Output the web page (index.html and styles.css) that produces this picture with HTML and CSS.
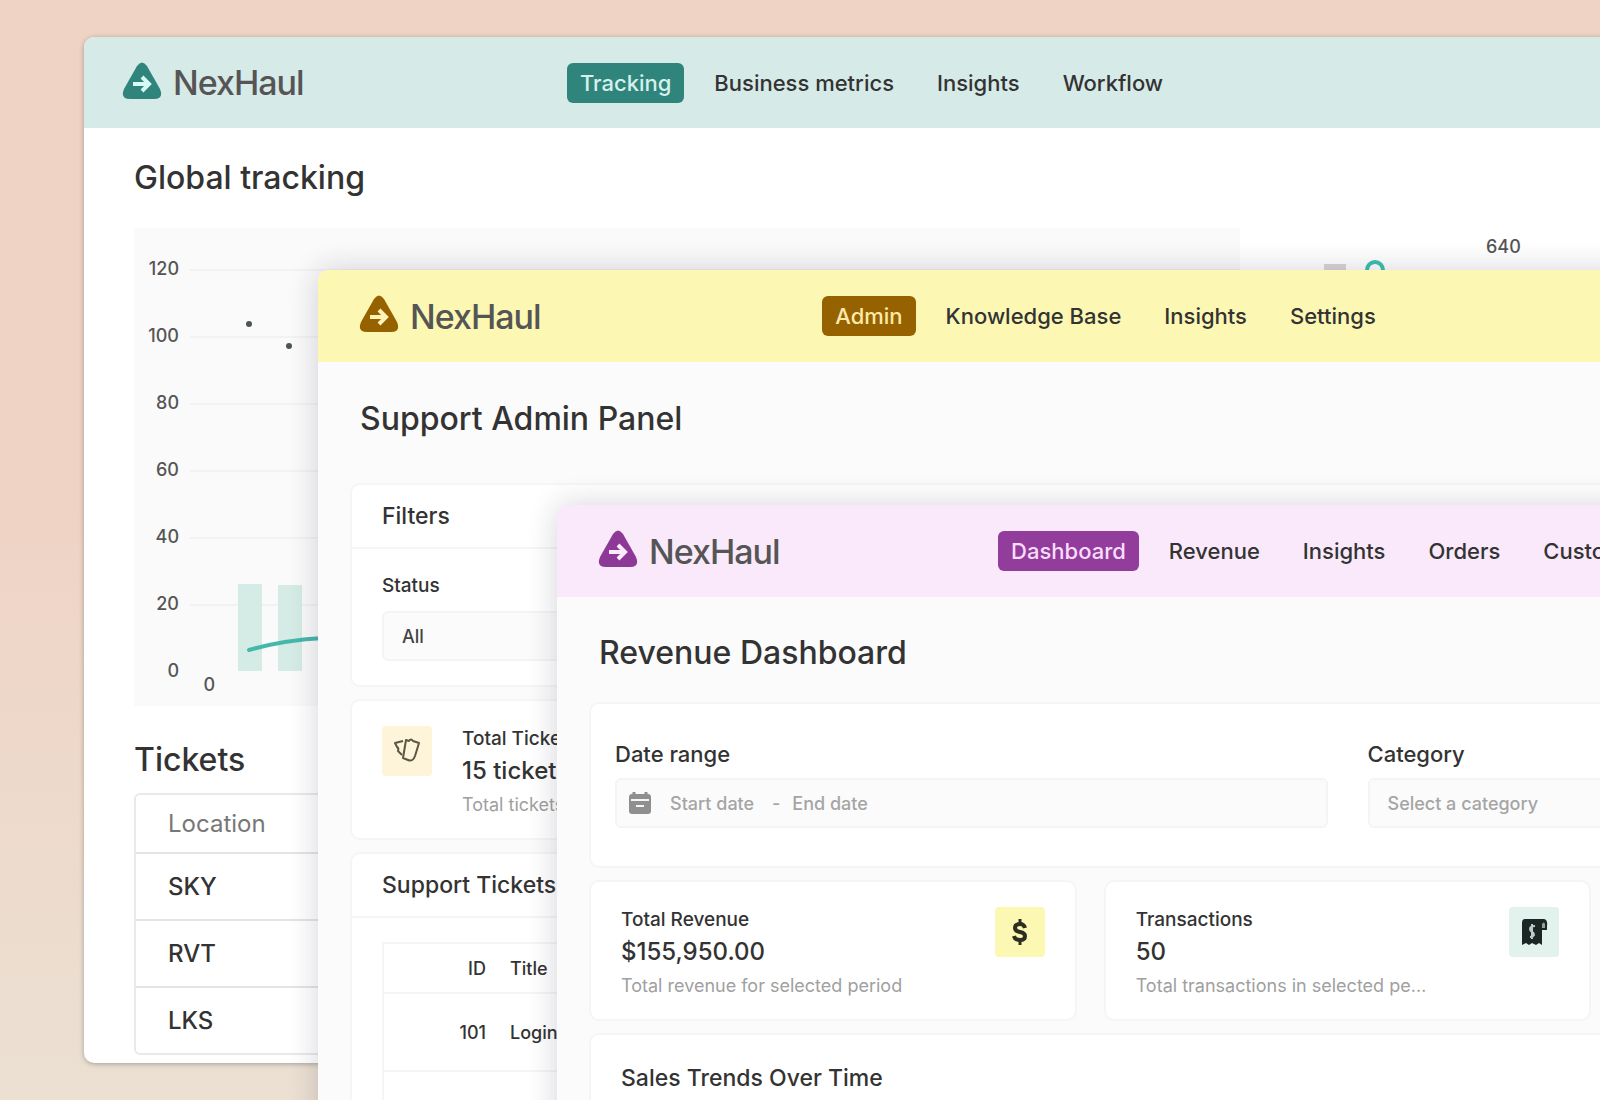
FILE: index.html
```html
<!DOCTYPE html>
<html lang="en">
<head>
    <meta charset="utf-8">
    <title>NexHaul</title>
    <link rel="stylesheet" href="styles.css">
</head>
<body>
    <div class="desktop">

        <!-- Tracking app -->
        <section class="window tracking">
            <header class="topbar">
                <a href="#" class="brand">
                    <svg class="logo" viewBox="0 0 40 38">
                        <path d="M15 4 Q20 -3 25 4 L38 27 Q42 37 32 37 L8 37 Q-2 37 2 27 Z" fill="currentColor"/>
                        <path d="M11 22 H27 M20 15 L27 22 L20 29" fill="none" stroke="#d8faf5" stroke-width="4"/>
                    </svg>
                    <span>NexHaul</span>
                </a>
                <nav>
                    <a href="#" class="active">Tracking</a>
                    <a href="#">Business metrics</a>
                    <a href="#">Insights</a>
                    <a href="#">Workflow</a>
                </nav>
            </header>
            <main>
                <h1>Global tracking</h1>
                <div class="charts">
                    <svg class="chart">
                        <g stroke="#f2f2f2" stroke-width="2">
                            <path d="M56 42 H1106"/>
                            <path d="M56 109 H1106"/>
                            <path d="M56 176 H1106"/>
                            <path d="M56 243 H1106"/>
                            <path d="M56 310 H1106"/>
                            <path d="M56 377 H1106"/>
                        </g>
                        <g class="axis" text-anchor="end">
                            <text x="45" y="47">120</text>
                            <text x="45" y="114">100</text>
                            <text x="45" y="181">80</text>
                            <text x="45" y="248">60</text>
                            <text x="45" y="315">40</text>
                            <text x="45" y="382">20</text>
                            <text x="45" y="449">0</text>
                            <text x="81" y="463">0</text>
                        </g>
                        <rect x="104" y="356" width="24" height="87" fill="#d5ebe5"/>
                        <rect x="144" y="357" width="24" height="86" fill="#d5ebe5"/>
                        <path d="M115 422 Q150 412 190 410" fill="none" stroke="#45b8ac" stroke-width="4" stroke-linecap="round"/>
                        <circle cx="115" cy="96" r="3" fill="#4c5655"/>
                        <circle cx="155" cy="118" r="3" fill="#4c5655"/>
                    </svg>
                    <svg class="chart side">
                        <rect x="84" y="36" width="22" height="10" fill="#d8d6da"/>
                        <circle cx="135" cy="42" r="8" fill="none" stroke="#3cc0b0" stroke-width="4"/>
                        <text class="axis" x="246" y="25">640</text>
                    </svg>
                </div>
                <h2>Tickets</h2>
                <table class="locations">
                    <thead>
                        <tr><th>Location</th></tr>
                    </thead>
                    <tbody>
                        <tr><td>SKY</td></tr>
                        <tr><td>RVT</td></tr>
                        <tr><td>LKS</td></tr>
                    </tbody>
                </table>
            </main>
        </section>

        <!-- Support app -->
        <section class="window support">
            <header class="topbar">
                <a href="#" class="brand">
                    <svg class="logo" viewBox="0 0 40 38">
                        <path d="M15 4 Q20 -3 25 4 L38 27 Q42 37 32 37 L8 37 Q-2 37 2 27 Z" fill="currentColor"/>
                        <path d="M11 22 H27 M20 15 L27 22 L20 29" fill="none" stroke="#fff3b8" stroke-width="4"/>
                    </svg>
                    <span>NexHaul</span>
                </a>
                <nav>
                    <a href="#" class="active">Admin</a>
                    <a href="#">Knowledge Base</a>
                    <a href="#">Insights</a>
                    <a href="#">Settings</a>
                </nav>
            </header>
            <main>
                <h1>Support Admin Panel</h1>
                <div class="card">
                    <h3>Filters</h3>
                    <div class="card-body">
                        <label class="small-label" for="status">Status</label>
                        <select id="status" class="field">
                            <option>All</option>
                        </select>
                    </div>
                </div>
                <div class="card stat">
                    <div class="stat-icon cream">
                        <svg width="28" height="28" viewBox="0 0 28 28" fill="none" stroke="#5c5646" stroke-width="2" stroke-linejoin="round">
                            <path d="M13 3 L16 4 Q18 1 20 4 L26 6 L22 19 Q20 25 15 23 L10 21 Z"/>
                            <path d="M10 4 L2 6 L4 10 Q6 11 5 14 L9 18"/>
                        </svg>
                    </div>
                    <div class="stat-text">
                        <span class="stat-name">Total Tickets</span>
                        <strong>15 tickets</strong>
                        <small>Total tickets in the system</small>
                    </div>
                </div>
                <div class="card">
                    <h3>Support Tickets</h3>
                    <div class="card-body">
                        <table class="tickets">
                            <thead>
                                <tr><th class="num">ID</th><th>Title</th></tr>
                            </thead>
                            <tbody>
                                <tr><td class="num">101</td><td>Login issue</td></tr>
                                <tr><td class="num">102</td><td>Payment failed</td></tr>
                            </tbody>
                        </table>
                    </div>
                </div>
            </main>
        </section>

        <!-- Revenue app -->
        <section class="window revenue">
            <header class="topbar">
                <a href="#" class="brand">
                    <svg class="logo" viewBox="0 0 40 38">
                        <path d="M15 4 Q20 -3 25 4 L38 27 Q42 37 32 37 L8 37 Q-2 37 2 27 Z" fill="currentColor"/>
                        <path d="M11 22 H27 M20 15 L27 22 L20 29" fill="none" stroke="#ffe9ff" stroke-width="4"/>
                    </svg>
                    <span>NexHaul</span>
                </a>
                <nav>
                    <a href="#" class="active">Dashboard</a>
                    <a href="#">Revenue</a>
                    <a href="#">Insights</a>
                    <a href="#">Orders</a>
                    <a href="#">Customers</a>
                </nav>
            </header>
            <main>
                <h1>Revenue Dashboard</h1>
                <form class="card filters">
                    <div>
                        <label for="start">Date range</label>
                        <div class="field range">
                            <svg width="22" height="24" viewBox="0 0 22 24">
                                <path d="M5 1 V5 M17 1 V5" stroke="#8f8f8f" stroke-width="3"/>
                                <rect x="0" y="3" width="22" height="20" rx="3" fill="#8f8f8f"/>
                                <path d="M2 9 H20" stroke="#f6f6f6" stroke-width="2"/>
                                <path d="M7 15 H15" stroke="#f6f6f6" stroke-width="2"/>
                            </svg>
                            <input type="text" id="start" placeholder="Start date">
                            <span>-</span>
                            <input type="text" aria-label="End date" placeholder="End date">
                        </div>
                    </div>
                    <div>
                        <label for="category">Category</label>
                        <select id="category" class="field empty">
                            <option>Select a category</option>
                        </select>
                    </div>
                </form>
                <div class="stats">
                    <div class="card stat">
                        <div class="stat-text">
                            <span class="stat-name">Total Revenue</span>
                            <strong>$155,950.00</strong>
                            <small>Total revenue for selected period</small>
                        </div>
                        <div class="stat-icon yellow">
                            <svg width="28" height="28" viewBox="0 0 28 28" fill="none" stroke="#2e2e20" stroke-width="4">
                                <path d="M19 10 Q18 6 14 6 Q9 6 9 10 Q9 13 14 14 Q19 15 19 18 Q19 22 14 22 Q9 22 8 18"/>
                                <path d="M14 1 V7 M14 21 V27" stroke-width="3"/>
                            </svg>
                        </div>
                    </div>
                    <div class="card stat">
                        <div class="stat-text">
                            <span class="stat-name">Transactions</span>
                            <strong>50</strong>
                            <small>Total transactions in selected period</small>
                        </div>
                        <div class="stat-icon mint">
                            <svg width="28" height="28" viewBox="0 0 28 28">
                                <path d="M5 1 H24 Q28 2 27 8 V12 H22 V27 L19 25 L16 27 L12 25 L9 27 L6 25 L2 27 V5 Q2 1 5 1 Z" fill="#1c2624"/>
                                <path d="M22 10 V6 Q24 3 25 6 V10 Z" fill="#8fa39d"/>
                                <path d="M15 8 Q10 8 10 11 Q10 13 12 14 Q14 15 14 17 Q13 19 10 19 M12 6 V21" fill="none" stroke="#b9ccc6" stroke-width="2"/>
                            </svg>
                        </div>
                    </div>
                    <div class="card stat">
                        <div class="stat-text">
                            <span class="stat-name">Average Order</span>
                        </div>
                    </div>
                </div>
                <div class="card trends">
                    <h2>Sales Trends Over Time</h2>
                </div>
            </main>
        </section>

    </div>
</body>
</html>
```

FILE: styles.css
```css
* {
    box-sizing: border-box;
}
body {
    margin: 0;
    font-family: Inter, "Liberation Sans", sans-serif;
    font-weight: 500;
    color: #333;
}
.desktop {
    position: relative;
    height: 100vh;
    overflow: hidden;
    background: linear-gradient(#efd3c5, #efd3c5 45%, #ebe0d2);
}

/* windows */
.window {
    position: absolute;
    width: calc(100% - 25px);
    border-radius: 10px;
    background: #fbfbfb;
    overflow: hidden;
    box-shadow: 0 0 30px rgba(40, 30, 60, 0.2);
}
.tracking {
    left: 84px;
    top: 37px;
    height: 1026px;
    background: white;
    box-shadow: 0 1px 5px rgba(60, 60, 60, 0.4);
}
.support {
    left: 318px;
    top: 270px;
}
.revenue {
    left: 557px;
    top: 505px;
}
.topbar {
    display: grid;
    grid-template-columns: 1fr auto 1fr;
    align-items: center;
    height: 92px;
    padding: 0 41px;
}
.tracking .topbar {
    height: 91px;
    background: #d6eae8;
    padding: 0 38px;
}
.support .topbar {
    background: #fcf8b4;
}
.revenue .topbar {
    background: #fae9fa;
}
.brand {
    display: flex;
    align-items: center;
    gap: 11px;
    font-size: 34px;
    letter-spacing: -1px;
    color: #555;
    text-decoration: none;
}
.logo {
    width: 40px;
    height: 38px;
    margin-bottom: 4px;
}
.tracking .logo {
    color: #2f857b;
}
.support .logo {
    color: #966200;
}
.revenue .logo {
    color: #8c3a96;
}
nav {
    display: flex;
    gap: 17px;
}
.revenue nav {
    padding-right: 20px;
}
nav a {
    padding: 0 13px;
    font-size: 22px;
    line-height: 40px;
    border-radius: 6px;
    color: #333;
    text-decoration: none;
}
.tracking .active {
    background: #2f857b;
    color: #d6f0ec;
}
.support .active {
    background: #966200;
    color: #fbe9a8;
}
.revenue .active {
    background: #923c9b;
    color: #f9ddfb;
}

/* content */
main {
    padding: 0 26px 26px 32px;
}
.tracking main {
    padding: 0 50px;
}
h1, h2, h3 {
    margin: 0;
    font-weight: 500;
}
h1 {
    padding: 32px 10px 39px;
    font-size: 32px;
    line-height: 50px;
}
.revenue h1 {
    padding-top: 31px;
    padding-bottom: 24px;
}
.tracking h1 {
    padding: 25px 0;
}
.tracking h2 {
    padding: 29px 0 8px;
    font-size: 32px;
    line-height: 50px;
}
.charts {
    display: flex;
    height: 478px;
}
.chart {
    flex: 3;
    height: 100%;
    background: #fafafa;
}
.chart.side {
    flex: 1;
    background: white;
}
.axis {
    font-size: 18px;
    fill: #555;
}

/* cards */
.card {
    margin-bottom: 12px;
    background: white;
    border: 2px solid #f5f5f5;
    border-radius: 10px;
}
.card h3 {
    padding: 0 30px;
    font-size: 23px;
    line-height: 62px;
    border-bottom: 2px solid #f5f5f5;
}
.card-body {
    padding: 24px 30px;
}
label {
    display: block;
    margin-bottom: 8px;
    font-size: 22px;
    line-height: 32px;
}
.small-label {
    margin-bottom: 12px;
    font-size: 19px;
    line-height: 26px;
}
.field {
    display: block;
    width: 100%;
    height: 50px;
    padding: 0 18px;
    font: inherit;
    font-size: 18px;
    color: #444;
    background: #fbfbfb;
    border: 2px solid #f4f4f4;
    border-radius: 6px;
    appearance: none;
}
.field.empty {
    color: #a5a5a5;
}
.range {
    display: flex;
    align-items: center;
    padding: 0 12px;
    color: #a5a5a5;
}
.range input {
    width: 90px;
    padding: 0;
    border: none;
    background: none;
    font: inherit;
}
.range svg {
    margin-right: 19px;
}
.range span {
    margin: 0 12px;
}
.range input::placeholder {
    color: #a5a5a5;
}
.filters {
    display: grid;
    grid-template-columns: 1fr 1fr;
    gap: 40px;
    padding: 34px 24px 38px;
}
.stats {
    display: grid;
    grid-template-columns: 1fr 1fr 1fr;
    gap: 27px;
}
.stat {
    display: flex;
    justify-content: space-between;
    padding: 25px 30px 16px;
    height: 141px;
}
.support .stat {
    justify-content: flex-start;
    gap: 30px;
}
.stat-text {
    display: flex;
    flex-direction: column;
    min-width: 0;
    width: 292px;
}
.stat-name {
    font-size: 19px;
    line-height: 26px;
}
.stat-text strong {
    font-size: 24px;
    font-weight: 500;
    line-height: 38px;
}
.stat-text small {
    font-size: 18px;
    font-weight: 400;
    line-height: 30px;
    color: #a0a0a0;
    white-space: nowrap;
    overflow: hidden;
    text-overflow: ellipsis;
}
.stat-icon {
    display: flex;
    align-items: center;
    justify-content: center;
    width: 50px;
    height: 50px;
    border-radius: 4px;
}
.cream {
    background: #fdf4d9;
}
.yellow {
    background: #fcf8b4;
}
.mint {
    background: #e2f2ed;
}
.trends {
    height: 400px;
    padding: 23px 30px;
}
.trends h2 {
    font-size: 23px;
    line-height: 40px;
}

/* tables */
table {
    width: 100%;
    border-spacing: 0;
}
th, td {
    text-align: left;
    font-weight: 500;
}
.locations {
    border: 2px solid #e9e9e9;
    border-radius: 6px;
    font-size: 24px;
}
.locations th {
    height: 57px;
    padding: 0 32px;
    font-weight: 400;
    color: #777;
}
.locations td {
    height: 67px;
    padding: 0 32px;
    border-top: 2px solid #e4e4e4;
}
.tickets {
    border: 2px solid #f5f5f5;
    font-size: 18px;
}
.tickets th {
    height: 48px;
    padding: 0 12px;
}
.tickets td {
    height: 78px;
    padding: 0 12px;
    border-top: 2px solid #f5f5f5;
}
.tickets .num {
    width: 114px;
    text-align: right;
}
```
